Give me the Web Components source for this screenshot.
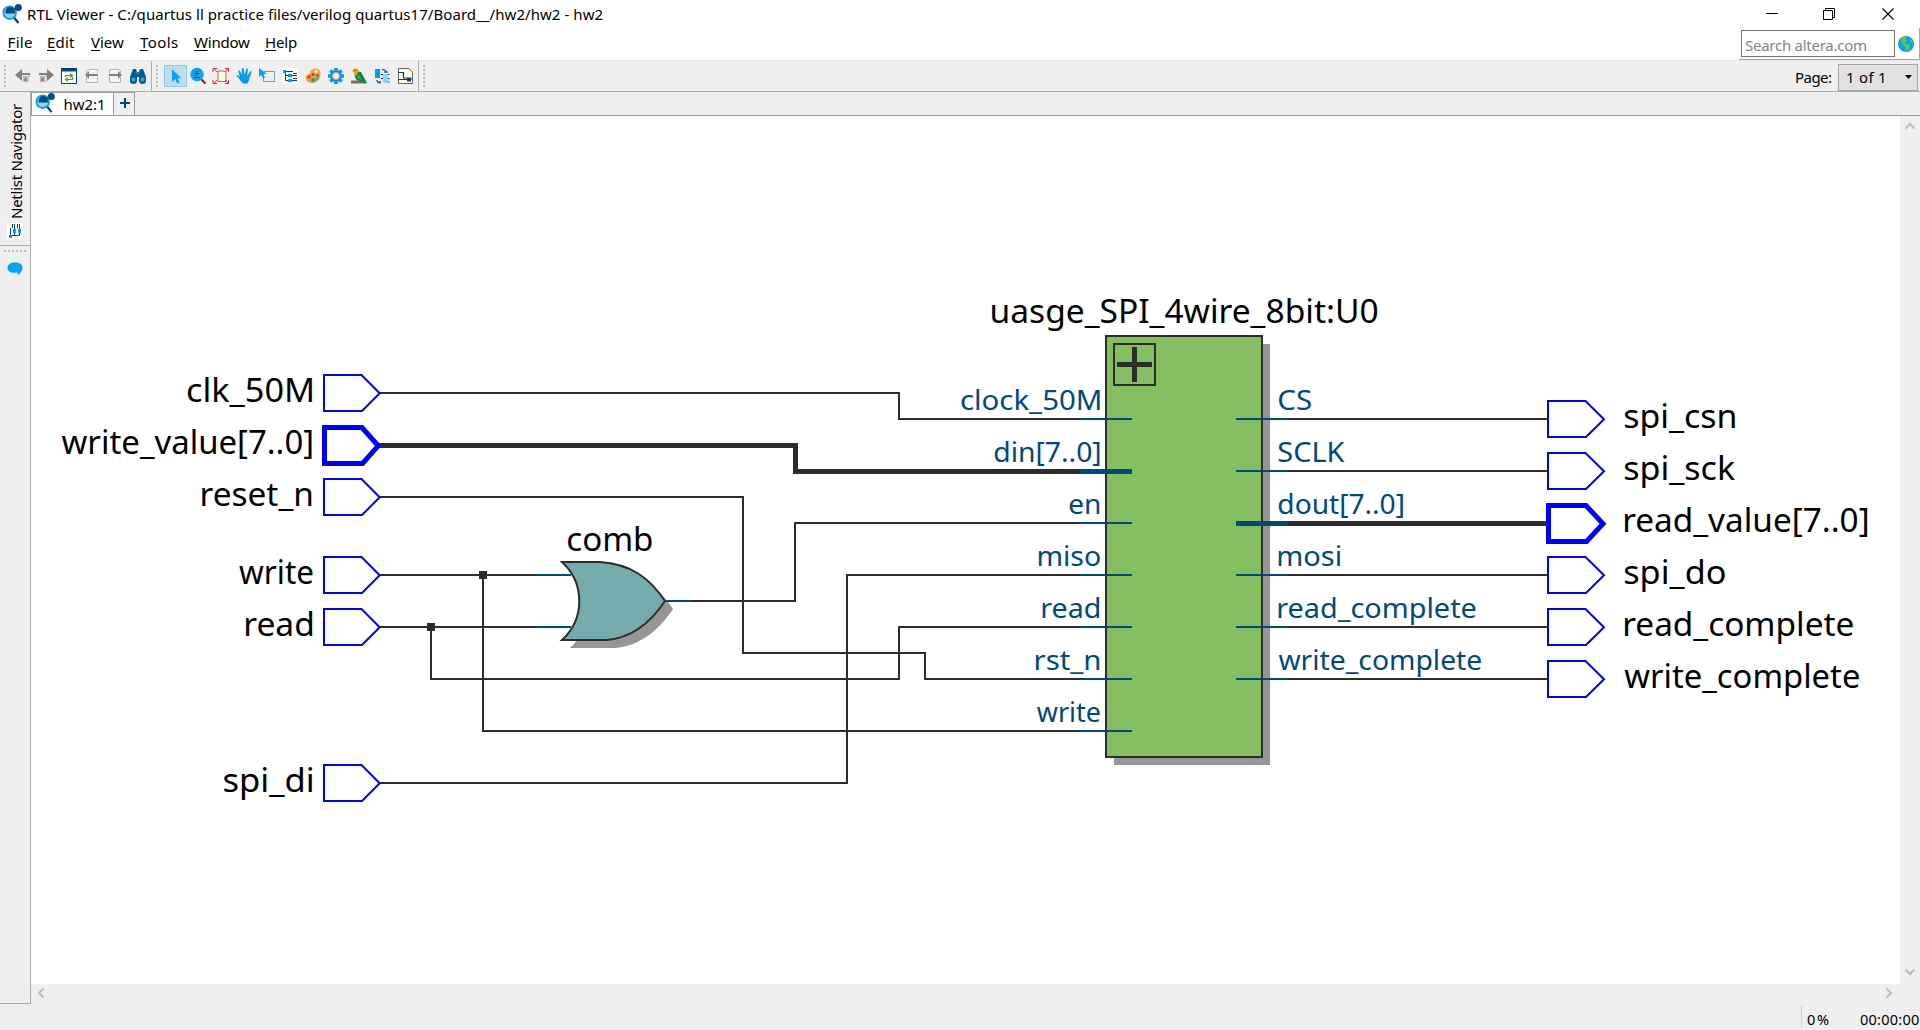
<!DOCTYPE html>
<html lang="en">
<head>
<meta charset="utf-8">
<title>RTL Viewer</title>
<style>
html,body{margin:0;height:100%;background:#efefef;overflow:hidden}
body{font-family:"Noto Sans","Open Sans",sans-serif;font-size:15px;color:#000}
</style>
</head>
<body>
<rtl-window></rtl-window>
<script>
const FONT = '"Noto Sans","Open Sans",sans-serif';
const ctx = document.createElement('canvas').getContext('2d');
function ink(text, size, family = FONT) {
  ctx.font = size + 'px ' + family;
  const m = ctx.measureText(text);
  return { left: m.actualBoundingBoxLeft, w: m.actualBoundingBoxLeft + m.actualBoundingBoxRight, adv: m.width };
}

/* Text run tracked to a given ink width */
class TrackedText extends HTMLElement {
  connectedCallback() {
    const t = this.getAttribute('text'), s = +(this.getAttribute('size') || 15), w = +this.getAttribute('w');
    const m = ink(t, s), sp = (w - m.w) / Math.max(1, t.length - 1);
    const body = this.hasAttribute('mnemonic') ? `<u>${t[0]}</u>${t.slice(1)}` : t;
    this.attachShadow({ mode: 'open' }).innerHTML = `<style>
      :host{display:block;flex:none;width:${w}px;white-space:nowrap;font-size:${s}px;line-height:20px;letter-spacing:${sp}px}
      span{display:block;margin-left:${m.left}px;width:max-content}
      u{text-decoration-thickness:1px;text-underline-offset:2px}
      :host([vertical]){width:20px;height:${w}px;writing-mode:vertical-rl;transform:rotate(180deg)}
      :host([vertical]) span{margin-left:0;margin-top:${m.left}px;width:auto;height:max-content}
      </style><span>${body}</span>`;
  }
}
customElements.define('tracked-text', TrackedText);

const TREE = '<rect width="16" height="16" fill="#fff"/><path d="M3.500 2v10.500H6M3.500 7.500H6M2 3.500h6" stroke="#00447c" fill="none"/><path d="M1 2h3v3H1zM6 6h4v3H6zM6 11h4v3H6z" fill="#00a0f0"/><path d="M8 3.500h3M10 7.500h5M10 12.500h5M11 5.500h4M11 10.500h4" stroke="#00447c" fill="none"/>';
const ICONS = {
  app: '<path d="M12 13.500l4.500 5.500" stroke="#00447c" stroke-width="2.200"/><circle cx="7.700" cy="8.700" r="6.300" fill="#8dd2f5" stroke="#0d9ddd" stroke-width="1.800"/><path d="M3.500 9.500c-.5-9 10-8 9.500 0z" fill="#004b87"/><path d="M11 5.500l5-2" stroke="#004b87" stroke-width="1.600"/><circle cx="16.300" cy="3.500" r="3.500" fill="#004b87"/>',
  back: '<path d="M0 7l7-6v4h8v4H7v4z" fill="#808080"/><path d="M7.500 7.500h6.500v7h-6.500z" fill="#b7b7b7" stroke="#efefef"/><path d="M9.500 10h2v3h-2z" fill="#808080"/>',
  forward: '<path d="M16 7L9 1v4H1v4h8v4z" fill="#808080"/><path d="M1.500 7.500H8v7H1.500z" fill="#b7b7b7" stroke="#efefef"/><path d="M3.500 10h2v3h-2z" fill="#808080"/>',
  refresh: '<path d="M.500 .500h15v15H.500z" fill="#fff" stroke="#00447c"/><path d="M0 0h16v3.500H0z" fill="#00447c"/><path d="M4.500 9V7.500h6M9 5.500l2.500 2L9 9.500M11.500 9v2.500h-6M7 9.500l-2.500 2L7 13.500" fill="none" stroke="#4a9a38" stroke-width="1.200"/>',
  prev: '<path d="M2.500 5V3l2-1.500h9v3M2.500 9v5.500h11V9" fill="#f6f6f6" stroke="#b5b5b5"/><path d="M1 7l4-4v3h9v2H5v3z" fill="#808080"/>',
  next: '<path d="M2.500 5V1.500h9l2 1.500v2M2.500 9v5.500h11V9" fill="#f6f6f6" stroke="#b5b5b5"/><path d="M15 7l-4-4v3H2v2h9v3z" fill="#808080"/>',
  find: '<path d="M3 1h3l1 3h2l1-3h3l3 8v3a3.500 3.500 0 0 1-7 1V9H7v4a3.500 3.500 0 0 1-7-1V9z" fill="#075a94"/><circle cx="3.500" cy="11.500" r="2" fill="#3ba5e0"/><circle cx="12.500" cy="11.500" r="2" fill="#3ba5e0"/><path d="M6 5h4" stroke="#35a0dd"/>',
  select: '<path d="M4 1.500v12.500l3.200-3 2 4.500 2.300-1-2-4.300h4z" fill="#00a5f5"/>',
  zoom: '<path d="M11 11l4.500 4.500" stroke="#a51515" stroke-width="2.200"/><circle cx="7" cy="6.500" r="6.700" fill="#07a5ee"/><path d="M7 3v5M4.500 5.500h5M4.500 9.500h5" stroke="#003e72" stroke-width="1"/>',
  fit: '<path d="M5 3h6.500l1.500 2v8.500H5z" fill="#fff9dd" stroke="#8b7364"/><path d="M4 4L.500 .500M0 4V.500h4M12 4l3.500-3.500M12 .500h3.500V4M4 12L.500 15.500M0 12v3.500h4M12 12l3.500 3.500M12 15.500h3.500V12" stroke="#e42a33" fill="none"/>',
  hand: '<path d="M7 15.500c-3-3-4-5.500-6.500-7.500 1-1.200 2-.6 3.500 1L2.200 3c.5-1 1.500-.8 2 .3L6 7 5.600 1c.5-1.300 1.900-1.300 2.200 0L8.500 7l1.600-5.800c.7-1 1.900-.7 1.800.4L11.300 8l2.700-4.500c1-.7 1.900 0 1.500 1L13.500 10c-.5 2-.7 3.500-2 5.500z" fill="#009fe8"/>',
  area: '<path d="M5.500 3.500h10v10H4.500V9" fill="none" stroke="#00447c" stroke-dasharray="1 1"/><path d="M0 0v9l2.500-2L4 10.500l2-1L4.500 6H8z" fill="#00a0ef"/>',
  tree: TREE,
  palette: '<path d="M1 8C3 6 4 7 5 5s1-4 5-4.500c4-.3 6 3 5.500 6.500-.5 5-4 8-8.500 8C2 15-.500 11 1 8z" fill="#f7a529"/><circle cx="11" cy="3.500" r="1.600" fill="#fff1d0"/><circle cx="4" cy="9" r="1.900" fill="#ef4030"/><circle cx="8" cy="12" r="2" fill="#0099e5"/><circle cx="12.500" cy="7.500" r="1.500" fill="#8650a0"/><circle cx="12" cy="11" r="1.400" fill="#58ae45"/><circle cx="8" cy="6.500" r="1.500" fill="#c8372a"/>',
  gear: '<g stroke="#0798dc" stroke-width="3.600"><path d="M8 0v16M0 8h16M2.400 2.400l11.200 11.200M13.600 2.400L2.400 13.600"/></g><circle cx="8" cy="8" r="6" fill="#0798dc"/><circle cx="8" cy="8" r="3.500" fill="#fff2cf" stroke="#bba77c"/>',
  bird: '<path d="M0 12.500h11l5 3H0z" fill="#866b61"/><path d="M4 3l6 1 6 11h-3l-5-2c-4-1-5-5-4-10z" fill="#118647"/><path d="M6 5l5 7-4-2z" fill="#44b63d"/><path d="M1 4.500l1-3C4-.500 7 0 8 3L4.500 8C3 7 3 5 3 4z" fill="#f4a020"/><circle cx="4" cy="2.500" r=".7" fill="#5d321c"/>',
  swap: '<path d="M1 1h5v9H1z" fill="#00a2ed"/><path d="M9 6h5v9H9z" fill="#8dd2f5"/><path d="M8 1.500c3 0 4 1 4 3M3 12c0 2 2 3 4 3M6 13v2.500" fill="none" stroke="#00447c" stroke-width="1.200"/><path d="M7 6.500h2M7 10.500h2M14 6.500h1.500M14 14h1.500M14 10.500h1.500M10 4h4" stroke="#00447c"/>',
  netlist: '<path d="M1.500 .500H12l3.500 3.500v11.500h-14z" fill="#fffbe6" stroke="#75615b"/><path d="M1 4.500h5.500V10h4M1 11.500h10M12.500 11h3" fill="none" stroke="#00447c" stroke-width="1.200"/><path d="M10 9.500h4v4h-4z" fill="#00447c"/>',
  globe: '<circle cx="8" cy="8" r="8" fill="#0aa1f2"/><path d="M3 2.500c2-2 4-2 6-2L7.500 3 9 5 6.500 6 8 8l4 1-1 3-3 3.500L7.500 11 4 7z" fill="#62ca28"/><path d="M11 2l3 2 1 4-2-2z" fill="#62ca28"/>',
  chat: '<path d="M8 1.500c5 0 7.500 2.200 7.500 5.200 0 4-3 5.500-5 7.800l.3-3C5 12.500.500 11 .500 6.700.500 3.500 3.500 1.500 8 1.500z" fill="#04a5f5"/>',
  minimize: '<path d="M2 7.500h12" stroke="#000"/>',
  restore: '<path d="M2.500 4.500h9v9h-9zM4.500 4V2.500h9v9H12" fill="none" stroke="#000"/>',
  close: '<path d="M2.500 2.500l11 11M13.500 2.500l-11 11" stroke="#000" stroke-width="1.100"/>',
  chevron: '<path d="M3.500 10.500L8 6l4.500 4.500" fill="none" stroke="#bcbcbc" stroke-width="2"/>'
};
class RtlIcon extends HTMLElement {
  connectedCallback() {
    const s = +(this.getAttribute('size') || 16), box = this.getAttribute('name') === 'app' ? 20 : 16;
    this.attachShadow({ mode: 'open' }).innerHTML = `<style>:host{display:block;flex:none;width:${s}px;height:${s}px}svg{display:block;overflow:visible}</style>
      <svg width="${s}" height="${s}" viewBox="0 0 ${box} ${box}">${ICONS[this.getAttribute('name')]}</svg>`;
  }
}
customElements.define('rtl-icon', RtlIcon);

class TitleBar extends HTMLElement {
  connectedCallback() {
    this.attachShadow({ mode: 'open' }).innerHTML = `<style>
      :host{display:flex;height:28px;background:#fff;align-items:center;padding-left:2px}
      rtl-icon.app{margin-right:6px}
      .sys{margin-left:auto;display:flex;gap:42px;padding-right:24px}
      .sys rtl-icon:nth-child(1){margin-right:-1px}.sys rtl-icon:nth-child(2){margin-right:1px}
      </style><rtl-icon class="app" name="app" size="20"></rtl-icon>
      <tracked-text w="574.500" text="RTL Viewer - C:/quartus ll practice files/verilog quartus17/Board__/hw2/hw2 - hw2"></tracked-text>
      <div class="sys"><rtl-icon name="minimize"></rtl-icon><rtl-icon name="restore"></rtl-icon><rtl-icon name="close"></rtl-icon></div>`;
  }
}
customElements.define('title-bar', TitleBar);

class MenuBar extends HTMLElement {
  connectedCallback() {
    const items = [['File', 23.5], ['Edit', 27], ['View', 33], ['Tools', 38], ['Window', 56], ['Help', 31]];
    this.attachShadow({ mode: 'open' }).innerHTML = `<style>
      :host{display:flex;height:32px;background:#fff;justify-content:space-between;border-bottom:1px solid #e7e7e7}
      nav{display:flex;gap:16px;padding:4px 0 0 8.500px}
      .tools{display:flex;align-items:center;gap:3px;box-sizing:border-box;height:32px;width:181px;padding-left:2px;border-bottom:1px solid #aaa;border-right:1px solid #aaa}
      .search{box-sizing:border-box;width:154px;height:27px;border:1px solid #777;padding:4px 0 0 3px;color:#858585;margin-bottom:0}
      </style><nav>${items.map(i => `<tracked-text mnemonic text="${i[0]}" w="${i[1]}"></tracked-text>`).join('')}</nav>
      <div class="tools"><div class="search"><tracked-text text="Search altera.com" w="121"></tracked-text></div><rtl-icon name="globe"></rtl-icon></div>`;
  }
}
customElements.define('menu-bar', MenuBar);

class ToolGroup extends HTMLElement {
  connectedCallback() {
    const icons = (this.getAttribute('icons') || '').split(' ').filter(Boolean);
    this.attachShadow({ mode: 'open' }).innerHTML = `<style>
      :host{display:flex;align-items:center;height:30px;box-sizing:border-box}
      .grip{width:2px;height:22px;margin:0 5px 0 4px;background:repeating-linear-gradient(#b9b9b9 0 2px,transparent 2px 4px)}
      .b{box-sizing:border-box;width:23px;height:22px;display:flex;align-items:center;justify-content:center}
      .on{background:#bfdcf3;border:1px solid #91c8f2;margin-left:1px;margin-right:-1px}
      </style><div class="grip"></div>${icons.map(n => `<div class="b ${n === 'select' ? 'on' : ''}"><rtl-icon name="${n}"></rtl-icon></div>`).join('')}`;
  }
}
customElements.define('tool-group', ToolGroup);

class ToolBar extends HTMLElement {
  connectedCallback() {
    this.attachShadow({ mode: 'open' }).innerHTML = `<style>
      :host{display:flex;height:30px;background:#efefef;border-bottom:1px solid #aeaeae;align-items:center}
      tool-group.a{width:152px;border-right:1px solid #aeaeae}
      tool-group.b{width:267px;border-right:1px solid #aeaeae}
      .page{margin-left:auto;display:flex;align-items:center;gap:7px;padding:2px 2px 0 0}
      .combo{box-sizing:border-box;width:80px;height:27px;border:1px solid #a5a5a5;background:#e1e1e1;display:flex;align-items:center;justify-content:space-between;padding:0 5px 0 8px}
      svg{display:block}
      </style><tool-group class="a" icons="back forward refresh prev next find"></tool-group>
      <tool-group class="b" icons="select zoom fit hand area tree palette gear bird swap netlist"></tool-group>
      <tool-group></tool-group>
      <div class="page"><tracked-text text="Page:" w="35"></tracked-text>
      <div class="combo"><tracked-text text="1 of 1" w="37"></tracked-text><svg width="7" height="4"><path d="M0 0h7L3.500 4z"/></svg></div></div>`;
  }
}
customElements.define('tool-bar', ToolBar);

class DockStrip extends HTMLElement {
  connectedCallback() {
    this.attachShadow({ mode: 'open' }).innerHTML = `<style>
      :host{display:flex;flex-direction:column;box-sizing:border-box;width:31px;height:912px;border-right:1px solid #aeaeae;border-bottom:1px solid #aeaeae;background:#efefef}
      .nav{display:flex;flex-direction:column;align-items:center;gap:5px;height:154px;box-sizing:border-box;padding:12px 0 0 0;border-bottom:1px solid #aeaeae}
      .nav tracked-text{margin-left:1px}
      .grip{height:2px;width:24px;margin:4px 0 9px 4px;background:repeating-linear-gradient(90deg,#b9b9b9 0 2px,transparent 2px 4px)}
      rtl-icon.c{margin-left:7px}
      </style><div class="nav"><tracked-text vertical text="Netlist Navigator" w="114"></tracked-text><rtl-icon name="tree" style="transform:rotate(-90deg)"></rtl-icon></div>
      <div class="grip"></div><rtl-icon class="c" name="chat"></rtl-icon>`;
  }
}
customElements.define('dock-strip', DockStrip);

class TabStrip extends HTMLElement {
  connectedCallback() {
    this.attachShadow({ mode: 'open' }).innerHTML = `<style>
      :host{display:flex;box-sizing:border-box;height:24px;border-bottom:1px solid #999;background:#efefef}
      .t{box-sizing:border-box;display:flex;width:83px;height:23px;border:1px solid #999;background:#fff;border-bottom:0;gap:9.500px;padding-left:3px;align-items:flex-start}
      .t tracked-text{margin-top:1px}
      .p{box-sizing:border-box;width:21px;height:23px;border:1px solid #999;border-left:0;border-bottom:0;display:flex;align-items:center;justify-content:center;padding:0 0 2px 1px}
      svg{display:block}
      </style><div class="t"><rtl-icon name="app" size="20"></rtl-icon><tracked-text text="hw2:1" w="38.500"></tracked-text></div>
      <div class="p"><svg width="10" height="10"><path d="M5 0v10M0 5h10" stroke="#00447c" stroke-width="2"/></svg></div>`;
  }
}
customElements.define('tab-strip', TabStrip);

/* Netlist drawing */
class SchematicView extends HTMLElement {
  connectedCallback() {
    const label = (t, x1, x2, y, s = 32, c = '#000') => {
      const m = ink(t, s), k = (x2 - x1) / m.w;
      return `<text x="${x1 + m.left * k}" y="${y}" font-size="${s}" fill="${c}" textLength="${m.adv * k}" lengthAdjust="spacingAndGlyphs">${t}</text>`;
    };
    const wire = (d, w = 2, c = '#2d2d2d') => `<path d="${d}" fill="none" stroke="${c}" stroke-width="${w}"/>`;
    const port = (x, y, w = 2, tip = 55.7) => `<path d="M${x} ${y - 18}h37.500L${x + tip} ${y + .3}L${x + 38} ${y + 18}H${x}z" fill="#fff" stroke="#00f" stroke-width="${w}"/>`;
    const B = '#00497a';
    const ins = [['clk_50M', 187, 312, 393], ['write_value[7..0]', 61.500, 311.500, 445.500], ['reset_n', 201.700, 312, 497], ['write', 239, 313, 575], ['read', 245.300, 312, 627], ['spi_di', 223.500, 312.300, 783]];
    const outs = [['spi_csn', 1735.500, 419], ['spi_sck', 1735, 471], ['read_value[7..0]', 1867, 523.500], ['spi_do', 1725, 575], ['read_complete', 1853.300, 627], ['write_complete', 1859.300, 679]];
    const pinsL = [['clock_50M', 961], ['din[7..0]', 994.300], ['en', 1069.300], ['miso', 1038.500], ['read', 1042.500], ['rst_n', 1035.700], ['write', 1036.700]];
    const pinsR = [['CS', 1311.300], ['SCLK', 1344.700], ['dout[7..0]', 1403], ['mosi', 1340], ['read_complete', 1475.500], ['write_complete', 1481]];
    const gate = 'M562 562H600C630 564 649 577 665 601C649 625 630 638 607 640H562C585 619 585 583 562 562z';
    let s = '';
    s += wire('M380 393H899V419H1080') + wire('M379 445.500H795.500V471.500H1080', 5) + wire('M380 497H743V653H925V679H1080');
    s += wire('M380 575H536') + wire('M483 575V731H1080') + wire('M380 627H536') + wire('M431 627V679H899V627H1080');
    s += wire('M690 601H795V523H1080') + wire('M380 783H847V575H1080');
    s += '<path d="M479 571h8v8h-8zM427 623h8v8h-8z" fill="#2d2d2d"/>';
    s += `<path d="${gate}" transform="translate(8 8)" fill="#969696"/><path d="${gate}" fill="#74acae" stroke="#2d2d2d" stroke-width="2"/>`;
    s += wire('M535 575H571M535 627H571M665 601H691', 2, B);
    s += '<path d="M1114 344h156v421h-156z" fill="#969696"/><path d="M1106 336h156v421h-156z" fill="#84c061" stroke="#2d2d2d" stroke-width="2"/>';
    s += '<path d="M1114 344h41v41h-41z" fill="none" stroke="#2d2d2d" stroke-width="2"/><path d="M1117 364.500h35M1134.500 347v35" stroke="#2d2d2d" stroke-width="5"/>';
    pinsL.forEach(([t, x], i) => { const w = i === 1 ? 5 : 2, y = 419 + 52 * i + (i === 1 ? .5 : 0); s += wire(`M1080 ${y}H1132`, w, B) + label(t, x, 1099.700, 409.700 + 52 * i, 27, B); });
    pinsR.forEach(([t, x], i) => { const w = i === 2 ? 5 : 2, y = 419 + 52 * i + (i === 2 ? .5 : 0); s += wire(`M1288 ${y}H1548`, w) + wire(`M1236 ${y}H1288`, w, B) + label(t, 1278.400, x, 409.700 + 52 * i, 27, B); });
    ins.forEach(([t, a, b, y]) => { s += port(y % 1 ? 324.500 : 324, y, y % 1 ? 5 : 2, y % 1 ? 53.700 : 55.700) + label(t, a, b, Math.floor(y) + 9); });
    outs.forEach(([t, b, y]) => { s += port(y % 1 ? 1548.500 : 1548, y, y % 1 ? 5 : 2, y % 1 ? 54.500 : 56) + label(t, 1624.300, b, Math.floor(y) + 9); });
    s += label('comb', 567.300, 651.700, 551) + label('uasge_SPI_4wire_8bit:U0', 991.700, 1377.300, 323);
    this.attachShadow({ mode: 'open' }).innerHTML = `<style>:host{display:block;width:1869px;height:868px;background:#fff}svg{display:block}text{font-family:${FONT}}</style>
      <svg width="1869" height="868" viewBox="31 116 1869 868">${s}</svg>`;
  }
}
customElements.define('schematic-view', SchematicView);

class ScrollFrame extends HTMLElement {
  connectedCallback() {
    this.attachShadow({ mode: 'open' }).innerHTML = `<style>
      :host{display:grid;grid-template-columns:1869px 20px;grid-template-rows:868px 20px;background:#efefef}
      .v{display:flex;flex-direction:column;justify-content:space-between;align-items:center;padding:2px 1px 4px 0}
      .h{display:flex;justify-content:space-between;align-items:center;padding:0 3px 2px 2px}
      </style><slot></slot><div class="v"><rtl-icon name="chevron"></rtl-icon><rtl-icon name="chevron" style="transform:rotate(180deg)"></rtl-icon></div>
      <div class="h"><rtl-icon name="chevron" style="transform:rotate(-90deg)"></rtl-icon><rtl-icon name="chevron" style="transform:rotate(90deg)"></rtl-icon></div>`;
  }
}
customElements.define('scroll-frame', ScrollFrame);

class StatusBar extends HTMLElement {
  connectedCallback() {
    this.attachShadow({ mode: 'open' }).innerHTML = `<style>
      :host{display:flex;height:26px;justify-content:flex-end;background:#efefef;padding-right:1px}
      .s{width:1px;height:22px;margin:2px 5px 0 0;background:#d0d0d0}
      tracked-text{margin-top:5px}tracked-text+tracked-text{margin-left:31px}
      </style><div class="s"></div><tracked-text text="0%" size="14.500" w="22"></tracked-text><tracked-text text="00:00:00" size="14.500" w="59"></tracked-text>`;
  }
}
customElements.define('status-bar', StatusBar);

class RtlWindow extends HTMLElement {
  connectedCallback() {
    this.attachShadow({ mode: 'open' }).innerHTML = `<style>
      :host{display:flex;flex-direction:column;width:1920px;height:1030px;background:#efefef;overflow:hidden}
      .mid{display:flex;height:912px}.main{display:flex;flex-direction:column;flex:1}
      </style><title-bar></title-bar><menu-bar></menu-bar><tool-bar></tool-bar>
      <div class="mid"><dock-strip></dock-strip><div class="main"><tab-strip></tab-strip><scroll-frame><schematic-view></schematic-view></scroll-frame></div></div>
      <status-bar></status-bar>`;
  }
}
customElements.define('rtl-window', RtlWindow);
</script>
</body>
</html>
